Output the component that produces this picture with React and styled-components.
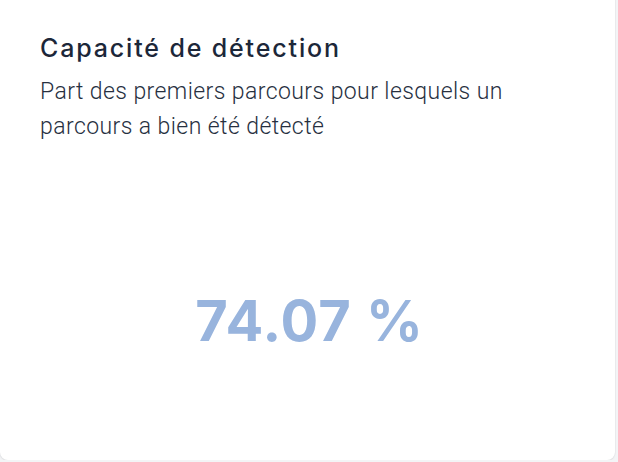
import React from "react";
import styled, { createGlobalStyle } from "styled-components";

const Global = createGlobalStyle`
  html, body {
    margin: 0;
    padding: 0;
    background: #f3f4f6;
    overflow: hidden;
  }
`;

const Card = styled.section`
  box-sizing: border-box;
  width: 615px;
  height: 470px;
  margin-top: -10px;
  background: #ffffff;
  border-radius: 8px;
  box-shadow: 0 1px 2px rgba(0, 0, 0, 0.07), 0 0 0 1px rgba(0, 0, 0, 0.025);
  padding: 43px 40px 30px 40px;
  display: flex;
  flex-direction: column;
`;

const Header = styled.header`
  display: flex;
  flex-direction: column;
  gap: 11px;
`;

const Title = styled.h2`
  margin: 0;
  font-family: Inter, "Noto Sans", sans-serif;
  font-weight: 500;
  font-size: 25px;
  line-height: 30px;
  color: #1c2739;
  letter-spacing: 1.85px;
`;

const Subtitle = styled.p`
  margin: 0;
  font-family: Roboto, "Noto Sans", sans-serif;
  font-weight: 300;
  font-size: 23px;
  line-height: 35px;
  color: #27303f;
  letter-spacing: 0.42px;
  max-width: 490px;
`;

const Body = styled.div`
  flex: 1;
  display: flex;
  align-items: center;
  justify-content: center;
  padding-top: 68px;
  padding-left: 4px;
`;

const Value = styled.div`
  font-family: Inter, "Noto Sans", sans-serif;
  font-weight: 700;
  font-size: 56px;
  line-height: 1;
  color: #98b4dd;
  letter-spacing: 1px;
`;

export default function App() {
  return (
    <>
      <Global />
      <Card>
        <Header>
          <Title>Capacité de détection</Title>
          <Subtitle>
            Part des premiers parcours pour lesquels un parcours a bien été
            détecté
          </Subtitle>
        </Header>
        <Body>
          <Value>74.07 %</Value>
        </Body>
      </Card>
    </>
  );
}
